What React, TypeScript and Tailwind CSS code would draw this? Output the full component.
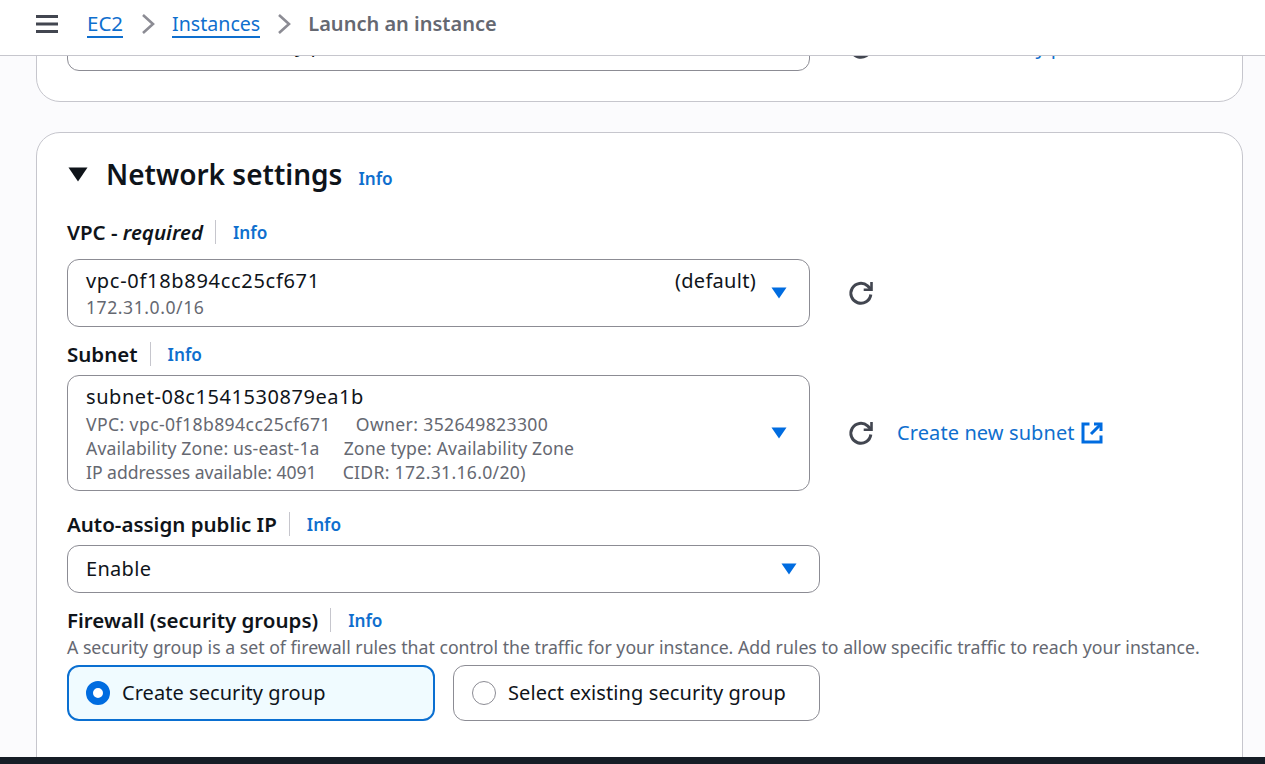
import React from "react";

const font = { fontFamily: '"Noto Sans", "Open Sans", sans-serif' };

function Caret({ className = "" }: { className?: string }) {
  return (
    <svg width="16" height="12" viewBox="0 0 16 12" className={className}>
      <path d="M0.5 0.5H15.5L8 11.5Z" fill="#006ce0" />
    </svg>
  );
}

function Refresh() {
  return (
    <svg width="26" height="26" viewBox="0 0 26 26" fill="none" stroke="#424650" strokeWidth="3" className="shrink-0">
      <path d="M22.8 14.5a10 10 0 1 1-3.2-8.6l3 3" />
      <path d="M23.5 2v7.8h-7.8" strokeWidth="2.6" />
    </svg>
  );
}

function External() {
  return (
    <svg width="22" height="22" viewBox="0 0 22 22" fill="none" stroke="#006ce0" strokeWidth="3" className="shrink-0">
      <path d="M8.5 2H2v18h18v-6.5" />
      <path d="M13 2h7v7" />
      <path d="M19.5 2.5 10 12" />
    </svg>
  );
}

function Label({ children }: { children: React.ReactNode }) {
  return (
    <div className="flex items-center h-6">
      <span className="pr-3 border-r border-[#c6c6cd] h-6 flex items-center text-[20.5px] font-semibold text-[#0f141a] leading-6 whitespace-nowrap">
        {children}
      </span>
      <a className="ml-[17px] mt-[2px] text-[17.2px] font-semibold text-[#0f6fce]">Info</a>
    </div>
  );
}

function Card({ children, className = "" }: { children: React.ReactNode; className?: string }) {
  return (
    <section className={`mx-9 w-[1207px] bg-white border border-[#c6c6cd] rounded-[24px] ${className}`}>{children}</section>
  );
}

export default function App() {
  return (
    <div style={font} className="h-[764px] w-[1265px] flex flex-col overflow-hidden bg-[#fbfbfd] text-[#0f141a]">
      <header className="h-14 shrink-0 bg-white border-b border-[#c6c6cd] flex items-center pb-[7px] z-10">
        <svg width="22" height="18" viewBox="0 0 22 18" className="ml-9">
          <path d="M0 1.5h22M0 9h22M0 16.5h22" stroke="#424650" strokeWidth="3" />
        </svg>
        <a className="ml-[29px] text-[20.5px] leading-6 text-[#0f6fce] border-b-2 border-[#0f6fce] h-[27px]">EC2</a>
        <svg width="14" height="22" viewBox="0 0 14 22" fill="none" stroke="#8c8c94" strokeWidth="2.6" className="ml-[18px]">
          <path d="M2 2l10 9-10 9" />
        </svg>
        <a className="ml-[17px] pt-px text-[19.6px] leading-6 text-[#0f6fce] border-b-2 border-[#0f6fce] h-[27px]">Instances</a>
        <svg width="14" height="22" viewBox="0 0 14 22" fill="none" stroke="#8c8c94" strokeWidth="2.6" className="ml-[17px]">
          <path d="M2 2l10 9-10 9" />
        </svg>
        <span className="ml-[17px] text-[20px] leading-6 font-semibold text-[#656871]">Launch an instance</span>
      </header>

      <main className="flex-1 min-h-0 overflow-hidden">
        <Card className="h-[120px] -mt-[74px] pt-[25px] pl-[30px]">
          <div className="flex items-end">
            <div className="w-[743px] h-[63px] border border-[#8c8c94] rounded-[12px] flex items-end pb-[11px] pl-[18px] text-[20px] leading-7 whitespace-nowrap">
              <span className="ml-[12px]">Proceed without a key pair (Not recommended)</span>
            </div>
            <div className="ml-[38px] flex items-center mb-[10px]">
              <Refresh />
              <span className="ml-[29px] text-[20px] leading-7 text-[#0f6fce] whitespace-nowrap">Create new key pair</span>
            </div>
          </div>
        </Card>

        <Card className="mt-[30px] h-[700px] pl-[30px]">
          <div className="flex items-center mt-[23px] h-9">
            <svg width="20" height="15" viewBox="0 0 20 15" className="ml-[1px]">
              <path d="M0.5 0.5H19.5L10 14.5Z" fill="#0f141a" />
            </svg>
            <h2 className="ml-[18px] text-[28px] font-semibold leading-9 text-[#0f141a]">Network settings</h2>
            <a className="ml-[16px] mt-[9px] text-[17.2px] font-semibold text-[#0f6fce]">Info</a>
          </div>

          <div className="mt-[28px]">
            <Label>
              <span>
                VPC - <em className="font-semibold">required</em>
              </span>
            </Label>
          </div>

          <div className="mt-[15px] flex items-center">
            <div className="relative w-[743px] h-[68px] border border-[#8c8c94] rounded-[12px] pl-[18px] pt-[6px] flex flex-col whitespace-nowrap">
              <div className="flex text-[20px] leading-[30px]">
                <span className="tracking-[0.7px]">vpc-0f18b894cc25cf671</span>
                <span className="ml-[355px] tracking-[0.3px]">(default)</span>
              </div>
              <span className="text-[17.6px] leading-[22px] text-[#656871] tracking-[0.55px]">172.31.0.0/16</span>
              <Caret className="absolute right-[22px] top-[27px]" />
            </div>
            <div className="ml-[38px]">
              <Refresh />
            </div>
          </div>

          <div className="mt-[15px]">
            <Label>Subnet</Label>
          </div>

          <div className="mt-[9px] flex items-center">
            <div className="relative w-[743px] h-[116px] border border-[#8c8c94] rounded-[12px] pl-[18px] pt-[6px] flex flex-col whitespace-nowrap">
              <span className="text-[20px] leading-[30px] tracking-[0.55px]">subnet-08c1541530879ea1b</span>
              <div className="text-[17.6px] leading-[24px] text-[#656871]">
                <div className="flex">
                  <span className="tracking-[0.4px]">VPC: vpc-0f18b894cc25cf671</span>
                  <span className="ml-[25px] tracking-[0.35px]">Owner: 352649823300</span>
                </div>
                <div className="flex">
                  <span className="tracking-[0.15px]">Availability Zone: us-east-1a</span>
                  <span className="ml-[24px] tracking-[0.15px]">Zone type: Availability Zone</span>
                </div>
                <div className="flex">
                  <span className="tracking-[-0.04px]">IP addresses available: 4091</span>
                  <span className="ml-[26px] tracking-[0.3px]">CIDR: 172.31.16.0/20)</span>
                </div>
              </div>
              <Caret className="absolute right-[22px] top-[51px]" />
            </div>
            <div className="ml-[38px] flex items-center">
              <Refresh />
              <a className="ml-[23px] text-[20px] tracking-[0.1px] text-[#0f6fce] whitespace-nowrap">Create new subnet</a>
              <span className="ml-[6px]">
                <External />
              </span>
            </div>
          </div>

          <div className="mt-[21px]">
            <Label>Auto-assign public IP</Label>
          </div>

          <div className="mt-[9px] relative w-[753px] h-12 border border-[#8c8c94] rounded-[12px] pl-[18px] flex items-center text-[20px] tracking-[0.3px]">
            Enable
            <Caret className="absolute right-[22px] top-[17px]" />
          </div>

          <div className="mt-[15px]">
            <Label>Firewall (security groups)</Label>
          </div>

          <p className="mt-[3px] text-[17.7px] leading-6 text-[#656871] whitespace-nowrap">
            A security group is a set of firewall rules that control the traffic for your instance. Add rules to allow specific traffic to reach your instance.
          </p>

          <div className="mt-[6px] flex gap-[18px]">
            <div className="w-[368px] h-[56px] border-2 border-[#0a6fd1] bg-[#f0fbff] rounded-[12px] flex items-center pl-[17px]">
              <span className="w-6 h-6 rounded-full border-[7px] border-[#006ce0] bg-white shrink-0" />
              <span className="ml-[12px] text-[20px] tracking-[0.05px]">Create security group</span>
            </div>
            <div className="w-[367px] h-[56px] border border-[#8c8c94] bg-white rounded-[12px] flex items-center pl-[18px]">
              <span className="w-6 h-6 rounded-full border-[1.5px] border-[#8c8c94] bg-white shrink-0" />
              <span className="ml-[12px] text-[20px] tracking-[0.1px]">Select existing security group</span>
            </div>
          </div>
        </Card>
      </main>

      <footer className="h-[7px] shrink-0 bg-[#161d26] z-10" />
    </div>
  );
}
